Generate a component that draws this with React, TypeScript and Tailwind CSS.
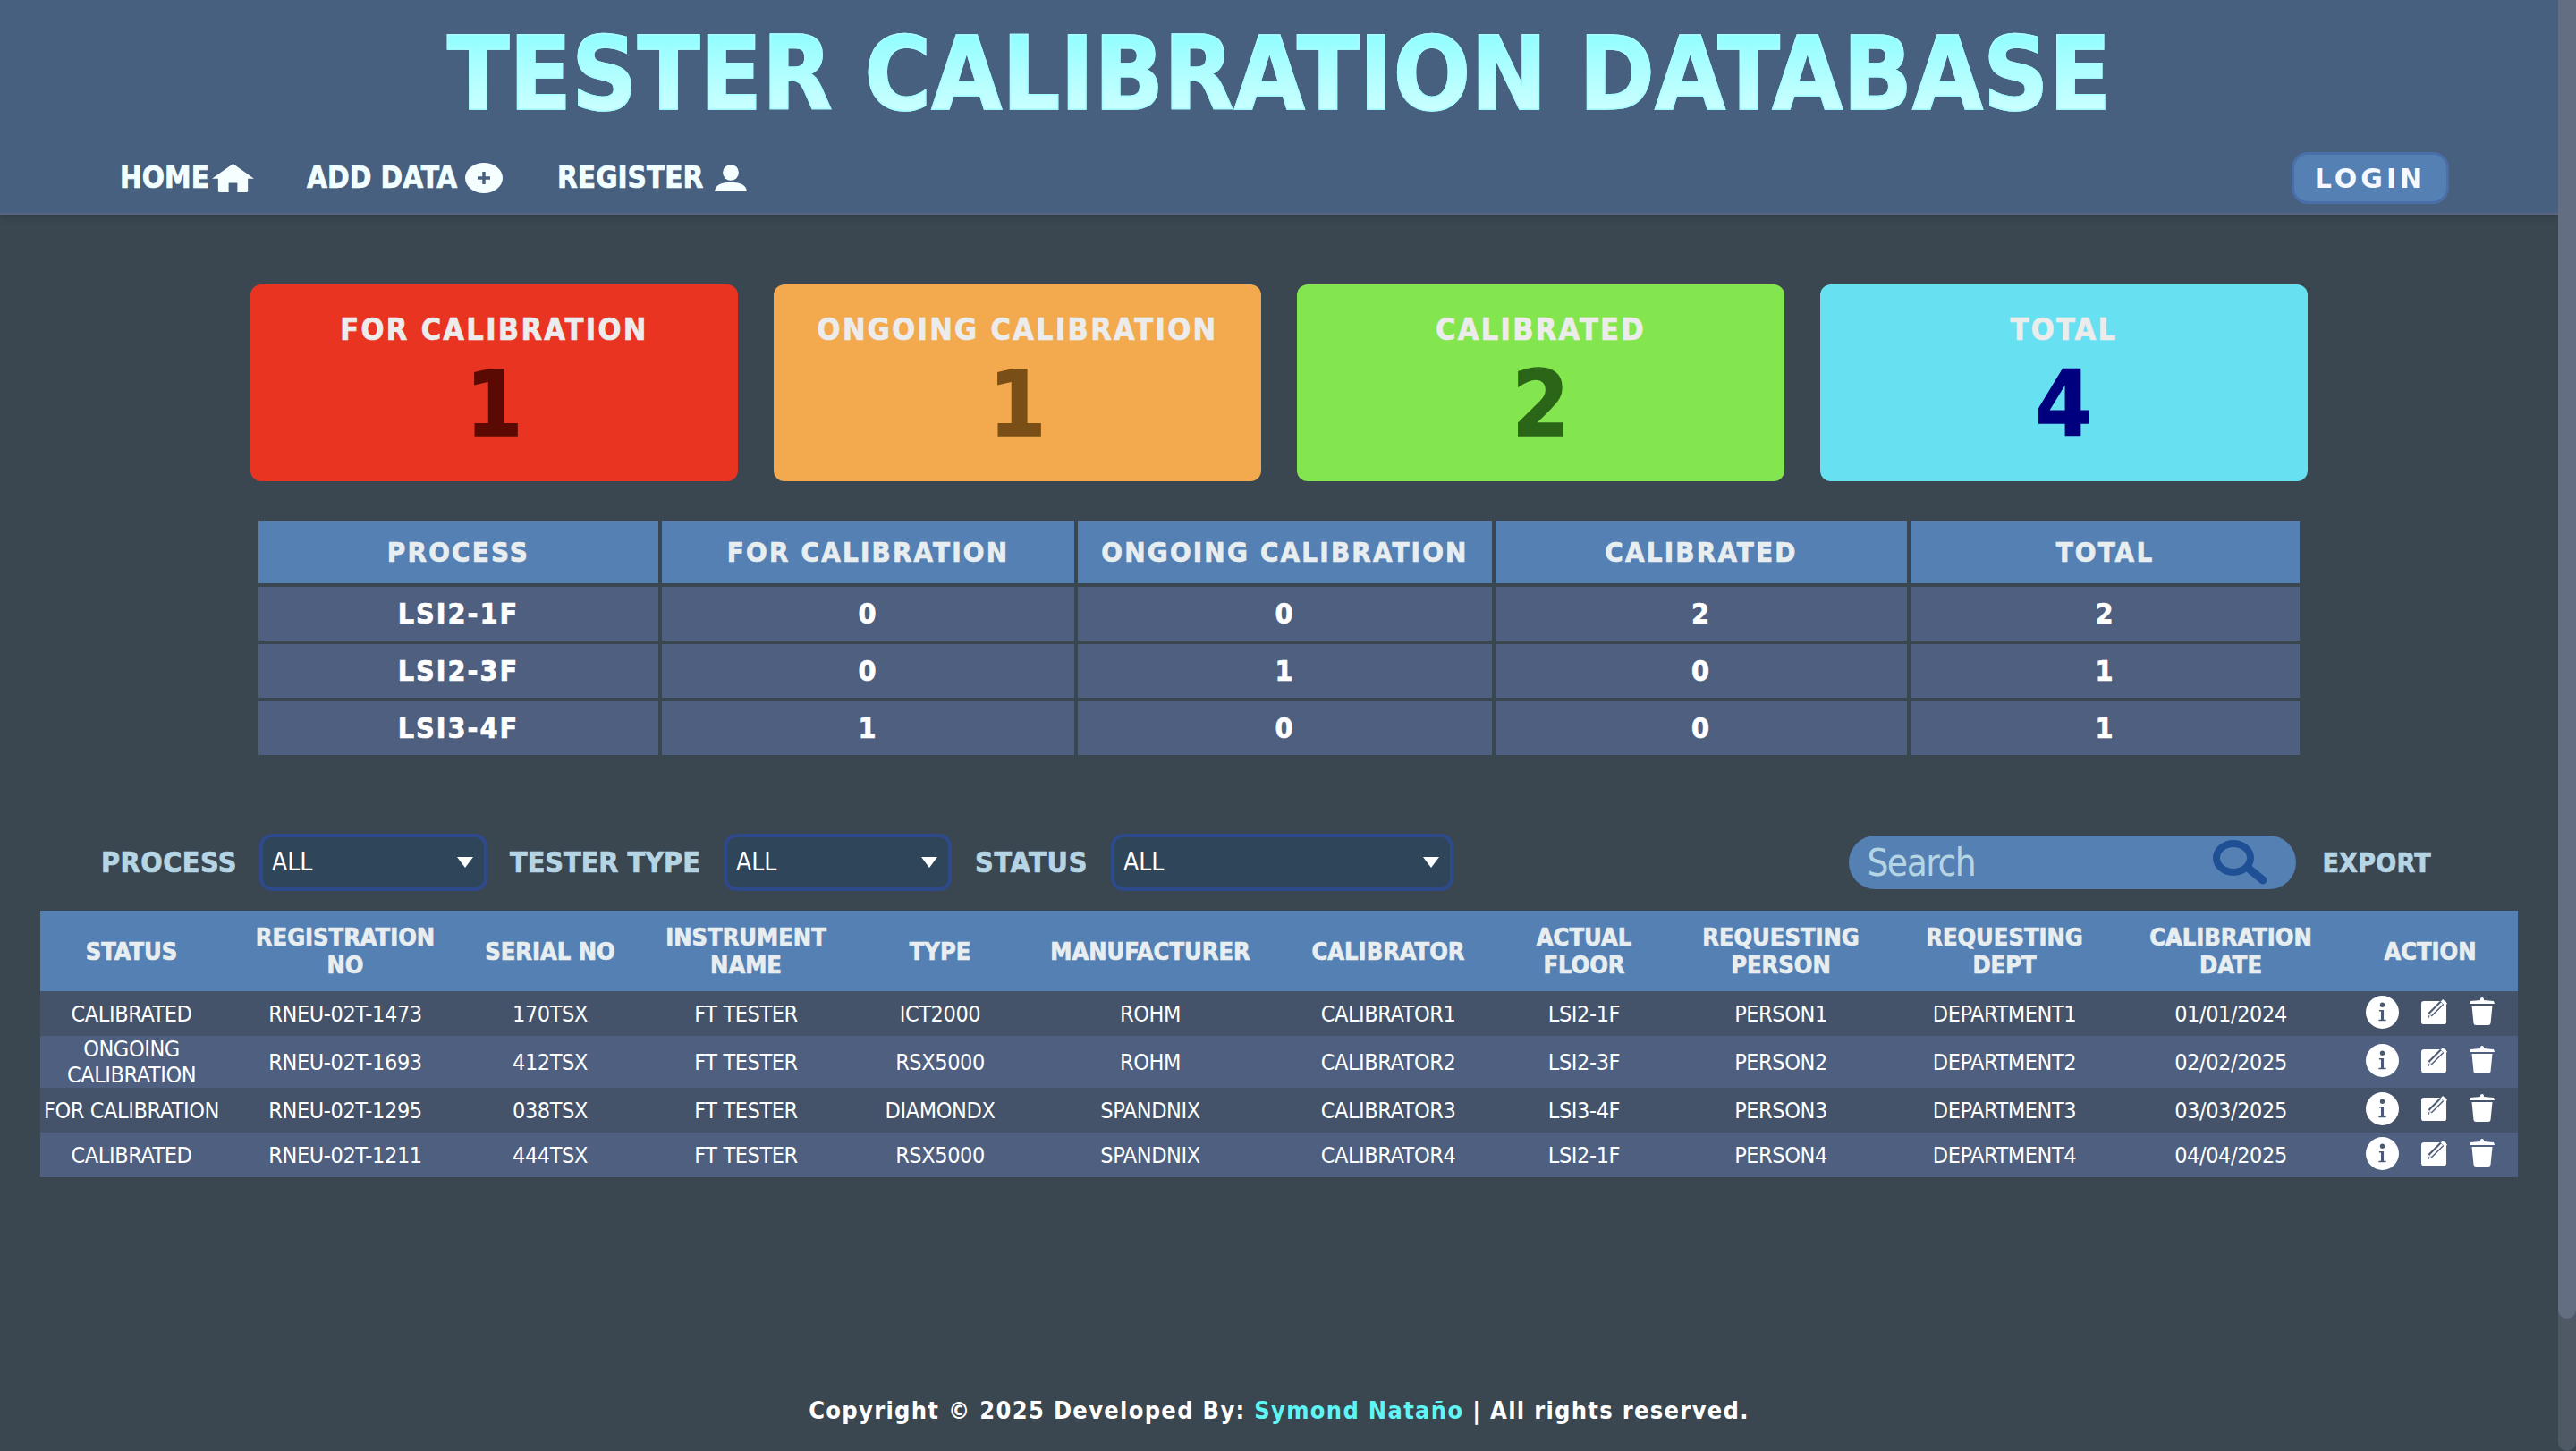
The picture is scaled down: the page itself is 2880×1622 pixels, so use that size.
const font = "font-['DejaVu_Sans_Condensed','DejaVu_Sans',sans-serif]";
// the reference font is heavier than DejaVu bold, so thicken the glyphs a bit
const heavy = "[-webkit-text-stroke:0.7px_currentColor]";

const cards = [
  { label: "FOR CALIBRATION", value: 1, bg: "bg-[#e93422]", color: "text-[#5a0a02]" },
  { label: "ONGOING CALIBRATION", value: 1, bg: "bg-[#f3a94e]", color: "text-[#7a4f17]" },
  { label: "CALIBRATED", value: 2, bg: "bg-[#84e64e]", color: "text-[#2b6618]" },
  { label: "TOTAL", value: 4, bg: "bg-[#67e1f1]", color: "text-[#00007f]" },
];

const summary = [
  ["LSI2-1F", 0, 0, 2, 2],
  ["LSI2-3F", 0, 1, 0, 1],
  ["LSI3-4F", 1, 0, 0, 1],
];

const records = [
  ["CALIBRATED", "RNEU-02T-1473", "170TSX", "FT TESTER", "ICT2000", "ROHM", "CALIBRATOR1", "LSI2-1F", "PERSON1", "DEPARTMENT1", "01/01/2024"],
  ["ONGOING CALIBRATION", "RNEU-02T-1693", "412TSX", "FT TESTER", "RSX5000", "ROHM", "CALIBRATOR2", "LSI2-3F", "PERSON2", "DEPARTMENT2", "02/02/2025"],
  ["FOR CALIBRATION", "RNEU-02T-1295", "038TSX", "FT TESTER", "DIAMONDX", "SPANDNIX", "CALIBRATOR3", "LSI3-4F", "PERSON3", "DEPARTMENT3", "03/03/2025"],
  ["CALIBRATED", "RNEU-02T-1211", "444TSX", "FT TESTER", "RSX5000", "SPANDNIX", "CALIBRATOR4", "LSI2-1F", "PERSON4", "DEPARTMENT4", "04/04/2025"],
];

const headers = ["STATUS", "REGISTRATION NO", "SERIAL NO", "INSTRUMENT NAME", "TYPE", "MANUFACTURER", "CALIBRATOR", "ACTUAL FLOOR", "REQUESTING PERSON", "REQUESTING DEPT", "CALIBRATION DATE", "ACTION"];

function HomeIcon() {
  return (
    <svg viewBox="0 0 48 40" preserveAspectRatio="none" className="w-[47px] h-[32px]" fill="#f5ffff">
      <path d="M24 0 L48 21 L41 21 L41 38 Q41 40 39 40 L29 40 L29 27 L19 27 L19 40 L9 40 Q7 40 7 38 L7 21 L0 21 Z" />
    </svg>
  );
}

function PlusIcon() {
  return (
    <svg viewBox="0 0 42 34" className="w-[42px] h-[34px]">
      <ellipse cx="21" cy="17" rx="21" ry="17" fill="#f5ffff" />
      <path d="M21 10 V24 M14 17 H28" stroke="#486080" strokeWidth="3.5" />
    </svg>
  );
}

function UserIcon() {
  return (
    <svg viewBox="0 0 38 32" className="w-[38px] h-[30px]" fill="#f5ffff">
      <ellipse cx="19" cy="9.5" rx="9.5" ry="9.5" />
      <path d="M0 32 C0 24 9 21 19 21 C29 21 38 24 38 32 Z" />
    </svg>
  );
}

function InfoIcon() {
  return (
    <svg viewBox="0 0 36 36" className="w-[37px] h-[37px]">
      <circle cx="18" cy="18" r="18" fill="#fff" />
      <circle cx="18" cy="10" r="2.6" fill="#4a5a75" />
      <path d="M14.5 15.5 H19.5 V26 H22 V27.5 H14 V26 H16.5 V17 H14.5 Z" fill="#4a5a75" />
    </svg>
  );
}

function EditIcon() {
  return (
    <svg viewBox="0 0 30 30" className="w-[29px] h-[29px]">
      <path d="M3 2 H27 Q29 2 29 4 V26 Q29 29 26 29 H3 Q0 29 0 26 V5 Q0 2 3 2 Z" fill="#fff" />
      <path d="M10 18 L24 4" stroke="#4a5a75" strokeWidth="6" />
      <path d="M10.5 18 L24 4.5" stroke="#fff" strokeWidth="2.5" />
      <path d="M9 21 Q8 21 9 19" stroke="#4a5a75" strokeWidth="2" fill="none" />
      <path d="M25 0 L30 5 L28 7 L23 2 Z" fill="#fff" />
    </svg>
  );
}

function TrashIcon() {
  return (
    <svg viewBox="0 0 28 32" className="w-[28px] h-[32px]" fill="#fff">
      <path d="M12 2 Q12 0 14 0 Q16 0 16 2 L16 3 L27 4 L28 7 L0 7 L1 4 L12 3 Z" />
      <path d="M2.5 9 H25.5 L23.5 29 Q23 31 21 31 H7 Q5 31 4.5 29 Z" />
    </svg>
  );
}

function Caret() {
  return <span className="w-0 h-0 border-x-[9px] border-x-transparent border-t-[12px] border-t-white" />;
}

function FilterSelect({ width }: { width: string }) {
  return (
    <div className={`${width} h-[64px] flex items-center justify-between pl-[10px] pr-[12px] rounded-[14px] border-[4px] border-[#2f4a8a] bg-[#2f4559] text-white text-[28px] font-normal [-webkit-text-stroke:0]`}>
      <span>ALL</span>
      <Caret />
    </div>
  );
}

export default function App() {
  return (
    <div className={`relative h-[1622px] overflow-hidden bg-[#3a4650] flex flex-col ${font}`}>
      <div className="w-[2860px] h-[1622px] flex flex-col">
        <header className="h-[240px] shrink-0 bg-[#486080] border-b-[2px] border-[#5a6580] shadow-[0_2px_6px_rgba(40,50,60,0.6)]">
          <h1 className="pt-[15px] text-center text-[113.5px] leading-[136px] font-bold">
            <span className="bg-gradient-to-b from-[#7ffdff] to-[#d9ffff] bg-clip-text text-transparent [-webkit-text-stroke:1.5px_#a8feff]">
              TESTER CALIBRATION DATABASE
            </span>
          </h1>
          <nav className={`mt-[19px] pl-[134px] pr-[122px] flex items-center text-[33px] font-bold text-[#f2ffff] ${heavy}`}>
            <a className="flex items-center gap-[3px] w-[209px]">HOME <HomeIcon /></a>
            <a className="flex items-center gap-[9px] w-[280px]">ADD DATA <PlusIcon /></a>
            <a className="flex items-center gap-[12px]">REGISTER <UserIcon /></a>
            <button className="ml-auto w-[176px] h-[58px] rounded-[18px] border-[3px] border-[#4a6fa8] bg-[#5580b3] text-[#f5f9ff] text-[30px] tracking-[4px] font-['DejaVu_Sans',sans-serif] [-webkit-text-stroke:0]">
              LOGIN
            </button>
          </nav>
        </header>

        <main className="flex-1 flex flex-col pt-[78px]">
          <section className="flex justify-center gap-[40px]">
            {cards.map((c) => (
              <div key={c.label} className={`w-[545px] h-[220px] rounded-[12px] ${c.bg} flex flex-col items-center pt-[29px]`}>
                <span className={`text-[34px] leading-[42px] font-bold tracking-[2.3px] text-[#ececec] ${heavy}`}>{c.label}</span>
                <span className={`text-[102px] leading-[110px] font-bold mt-[8px] [-webkit-text-stroke:1.5px_currentColor] ${c.color}`}>{c.value}</span>
              </div>
            ))}
          </section>

          <table className="mt-[40px] mx-auto w-[2288px] table-fixed border-separate border-spacing-[4px]">
            <colgroup>
              <col className="w-[447px]" />
              <col className="w-[461px]" />
              <col className="w-[463px]" />
              <col className="w-[460px]" />
              <col className="w-[435px]" />
            </colgroup>
            <thead>
              <tr>
                {["PROCESS", "FOR CALIBRATION", "ONGOING CALIBRATION", "CALIBRATED", "TOTAL"].map((h) => (
                  <th key={h} className={`h-[70px] bg-[#5580b3] text-[#e8eef0] text-[31px] font-bold tracking-[2.2px] ${heavy}`}>{h}</th>
                ))}
              </tr>
            </thead>
            <tbody>
              {summary.map((row) => (
                <tr key={row[0]}>
                  {row.map((v, i) => (
                    <td key={i} className={`h-[60px] bg-[#4e5f7f] text-white text-center text-[32px] font-bold tracking-[2px] ${heavy}`}>{v}</td>
                  ))}
                </tr>
              ))}
            </tbody>
          </table>

          <section className={`mt-[84px] pl-[113px] pr-[142px] flex items-center font-bold text-[32px] text-[#b5d5e5] ${heavy}`}>
            <span className="w-[177px] tracking-[0.5px]">PROCESS</span>
            <FilterSelect width="w-[255px]" />
            <span className="ml-[25px] w-[239px] whitespace-nowrap">TESTER TYPE</span>
            <FilterSelect width="w-[255px]" />
            <span className="ml-[26px] w-[152px] tracking-[0.8px]">STATUS</span>
            <FilterSelect width="w-[383px]" />
            <div className="ml-auto w-[500px] h-[60px] rounded-full bg-[#5580b3] flex items-center justify-between pl-[20px] pr-[32px]">
              <span className="text-[42px] font-normal tracking-[-1.5px] [-webkit-text-stroke:0]">Search</span>
              <svg viewBox="0 0 62 50" className="w-[62px] h-[50px]" fill="none" stroke="#1f5096">
                <ellipse cx="24" cy="20" rx="19" ry="16" strokeWidth="8" />
                <path d="M40 31 L57 45" strokeWidth="9" strokeLinecap="round" />
              </svg>
            </div>
            <span className="ml-[29px] text-[30px] tracking-[0.3px]">EXPORT</span>
          </section>

          <table className="mt-[22px] ml-[45px] w-[2770px] table-fixed border-collapse text-center">
            <colgroup>
              <col className="w-[204px]" />
              <col className="w-[274px]" />
              <col className="w-[184px]" />
              <col className="w-[254px]" />
              <col className="w-[180px]" />
              <col className="w-[290px]" />
              <col className="w-[242px]" />
              <col className="w-[196px]" />
              <col className="w-[244px]" />
              <col className="w-[256px]" />
              <col className="w-[250px]" />
              <col className="w-[196px]" />
            </colgroup>
            <thead>
              <tr className="h-[90px] bg-[#5580b3]">
                {headers.map((h) => (
                  <th key={h} className={`text-[27px] leading-[31px] font-bold text-[#e8eef0] ${heavy} ${h === "SERIAL NO" ? "whitespace-nowrap" : "px-[20px]"}`}>{h}</th>
                ))}
              </tr>
            </thead>
            <tbody className="text-[25px] leading-[29px] tracking-[-0.4px] text-white">
              {records.map((r, i) => (
                <tr key={r[1]} className={`${i === 1 ? "h-[58px]" : "h-[50px]"} ${i % 2 === 0 ? "bg-[#445369]" : "bg-[#4e5f7f]"}`}>
                  {r.map((v, j) => (
                    <td key={j} className={j === 0 && i === 1 ? "px-[20px]" : "whitespace-nowrap"}>{v}</td>
                  ))}
                  <td>
                    <div className="flex items-center justify-center gap-[25px] -mt-[4px]">
                      <InfoIcon />
                      <EditIcon />
                      <TrashIcon />
                    </div>
                  </td>
                </tr>
              ))}
            </tbody>
          </table>

          <footer className="mt-auto pb-[28px] text-center text-[27px] leading-[34px] font-bold tracking-[1.3px] text-white">
            Copyright © 2025 Developed By: <span className="text-[#5ff5f5]">Symond Nataño</span> | All rights reserved.
          </footer>
        </main>
      </div>

      {/* fake page scrollbar */}
      <div className="absolute top-0 right-0 bottom-0 w-[20px] bg-[#4f5966] rounded-b-full">
        <div className="h-[1474px] bg-[#636e82] rounded-b-full" />
      </div>
    </div>
  );
}
